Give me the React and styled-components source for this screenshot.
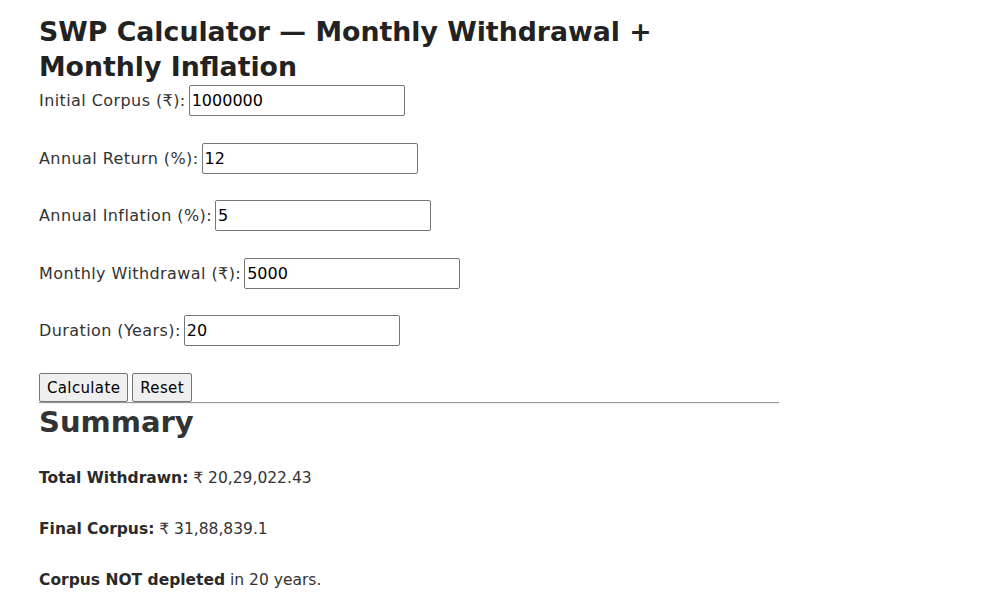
import React from "react";
import styled, { createGlobalStyle } from "styled-components";

const Global = createGlobalStyle`
  html, body { margin: 0; padding: 0; background: #fff; }
  body { font-family: "DejaVu Sans", "Noto Sans", sans-serif; color: #333; }
`;

const Page = styled.main`
  width: 740px;
  padding: 14px 0 0 39px;
  display: flex;
  flex-direction: column;
`;

const Title = styled.h1`
  margin: 0;
  font-size: 26.75px;
  line-height: 35px;
  font-weight: 700;
  color: #222;
`;

const Form = styled.form`
  display: flex;
  flex-direction: column;
  gap: 26.5px;
  margin-top: 1px;
`;

const Row = styled.div`
  display: flex;
  align-items: center;
  gap: 3px;
  height: 31px;
`;

const Label = styled.label`
  font-size: 16px;
  letter-spacing: 0.42px;
  color: #333;
  white-space: nowrap;
`;

const Input = styled.input`
  box-sizing: border-box;
  width: 216px;
  height: 31px;
  border: 1px solid #767676;
  border-radius: 2px;
  padding: 1px 2px;
  font-family: "DejaVu Sans", "Noto Sans", sans-serif;
  font-size: 16px;
  color: #000;
  background: #fff;
`;

const Actions = styled.div`
  display: flex;
  gap: 4px;
  margin-top: 27px;
`;

const Button = styled.button`
  box-sizing: border-box;
  height: 29px;
  padding: 0 7px;
  font-family: "DejaVu Sans", "Noto Sans", sans-serif;
  font-size: 15px;
  letter-spacing: 0.35px;
  color: #000;
  background: #efefef;
  border: 1px solid #767676;
  border-radius: 2px;
`;

const Rule = styled.hr`
  margin: 0;
  border: none;
  border-top: 1px solid #9a9a9a;
  border-bottom: 1px solid #eee;
  width: 740px;
`;

const Subtitle = styled.h2`
  margin: 0;
  font-size: 29px;
  line-height: 36px;
  font-weight: 700;
  color: #333;
`;

const Summary = styled.div`
  display: flex;
  flex-direction: column;
  gap: 27px;
  margin-top: 26px;
`;

const Line = styled.p`
  margin: 0;
  font-size: 15.5px;
  line-height: 24px;
  color: #333;
  b { font-weight: 700; color: #2a2a2a; }
`;

const fields = [
  ["Initial Corpus (₹):", "1000000"],
  ["Annual Return (%):", "12"],
  ["Annual Inflation (%):", "5"],
  ["Monthly Withdrawal (₹):", "5000"],
  ["Duration (Years):", "20"],
];

export default function App() {
  return (
    <>
      <Global />
      <Page>
        <Title>SWP Calculator — Monthly Withdrawal + Monthly Inflation</Title>
        <Form onSubmit={(e) => e.preventDefault()}>
          {fields.map(([l, v]) => (
            <Row key={l}>
              <Label>{l}</Label>
              <Input defaultValue={v} />
            </Row>
          ))}
        </Form>
        <Actions>
          <Button type="button">Calculate</Button>
          <Button type="button">Reset</Button>
        </Actions>
        <Rule />
        <Subtitle>Summary</Subtitle>
        <Summary>
          <Line><b>Total Withdrawn:</b> ₹ 20,29,022.43</Line>
          <Line><b>Final Corpus:</b> ₹ 31,88,839.1</Line>
          <Line><b>Corpus NOT depleted</b> in 20 years.</Line>
        </Summary>
      </Page>
    </>
  );
}
